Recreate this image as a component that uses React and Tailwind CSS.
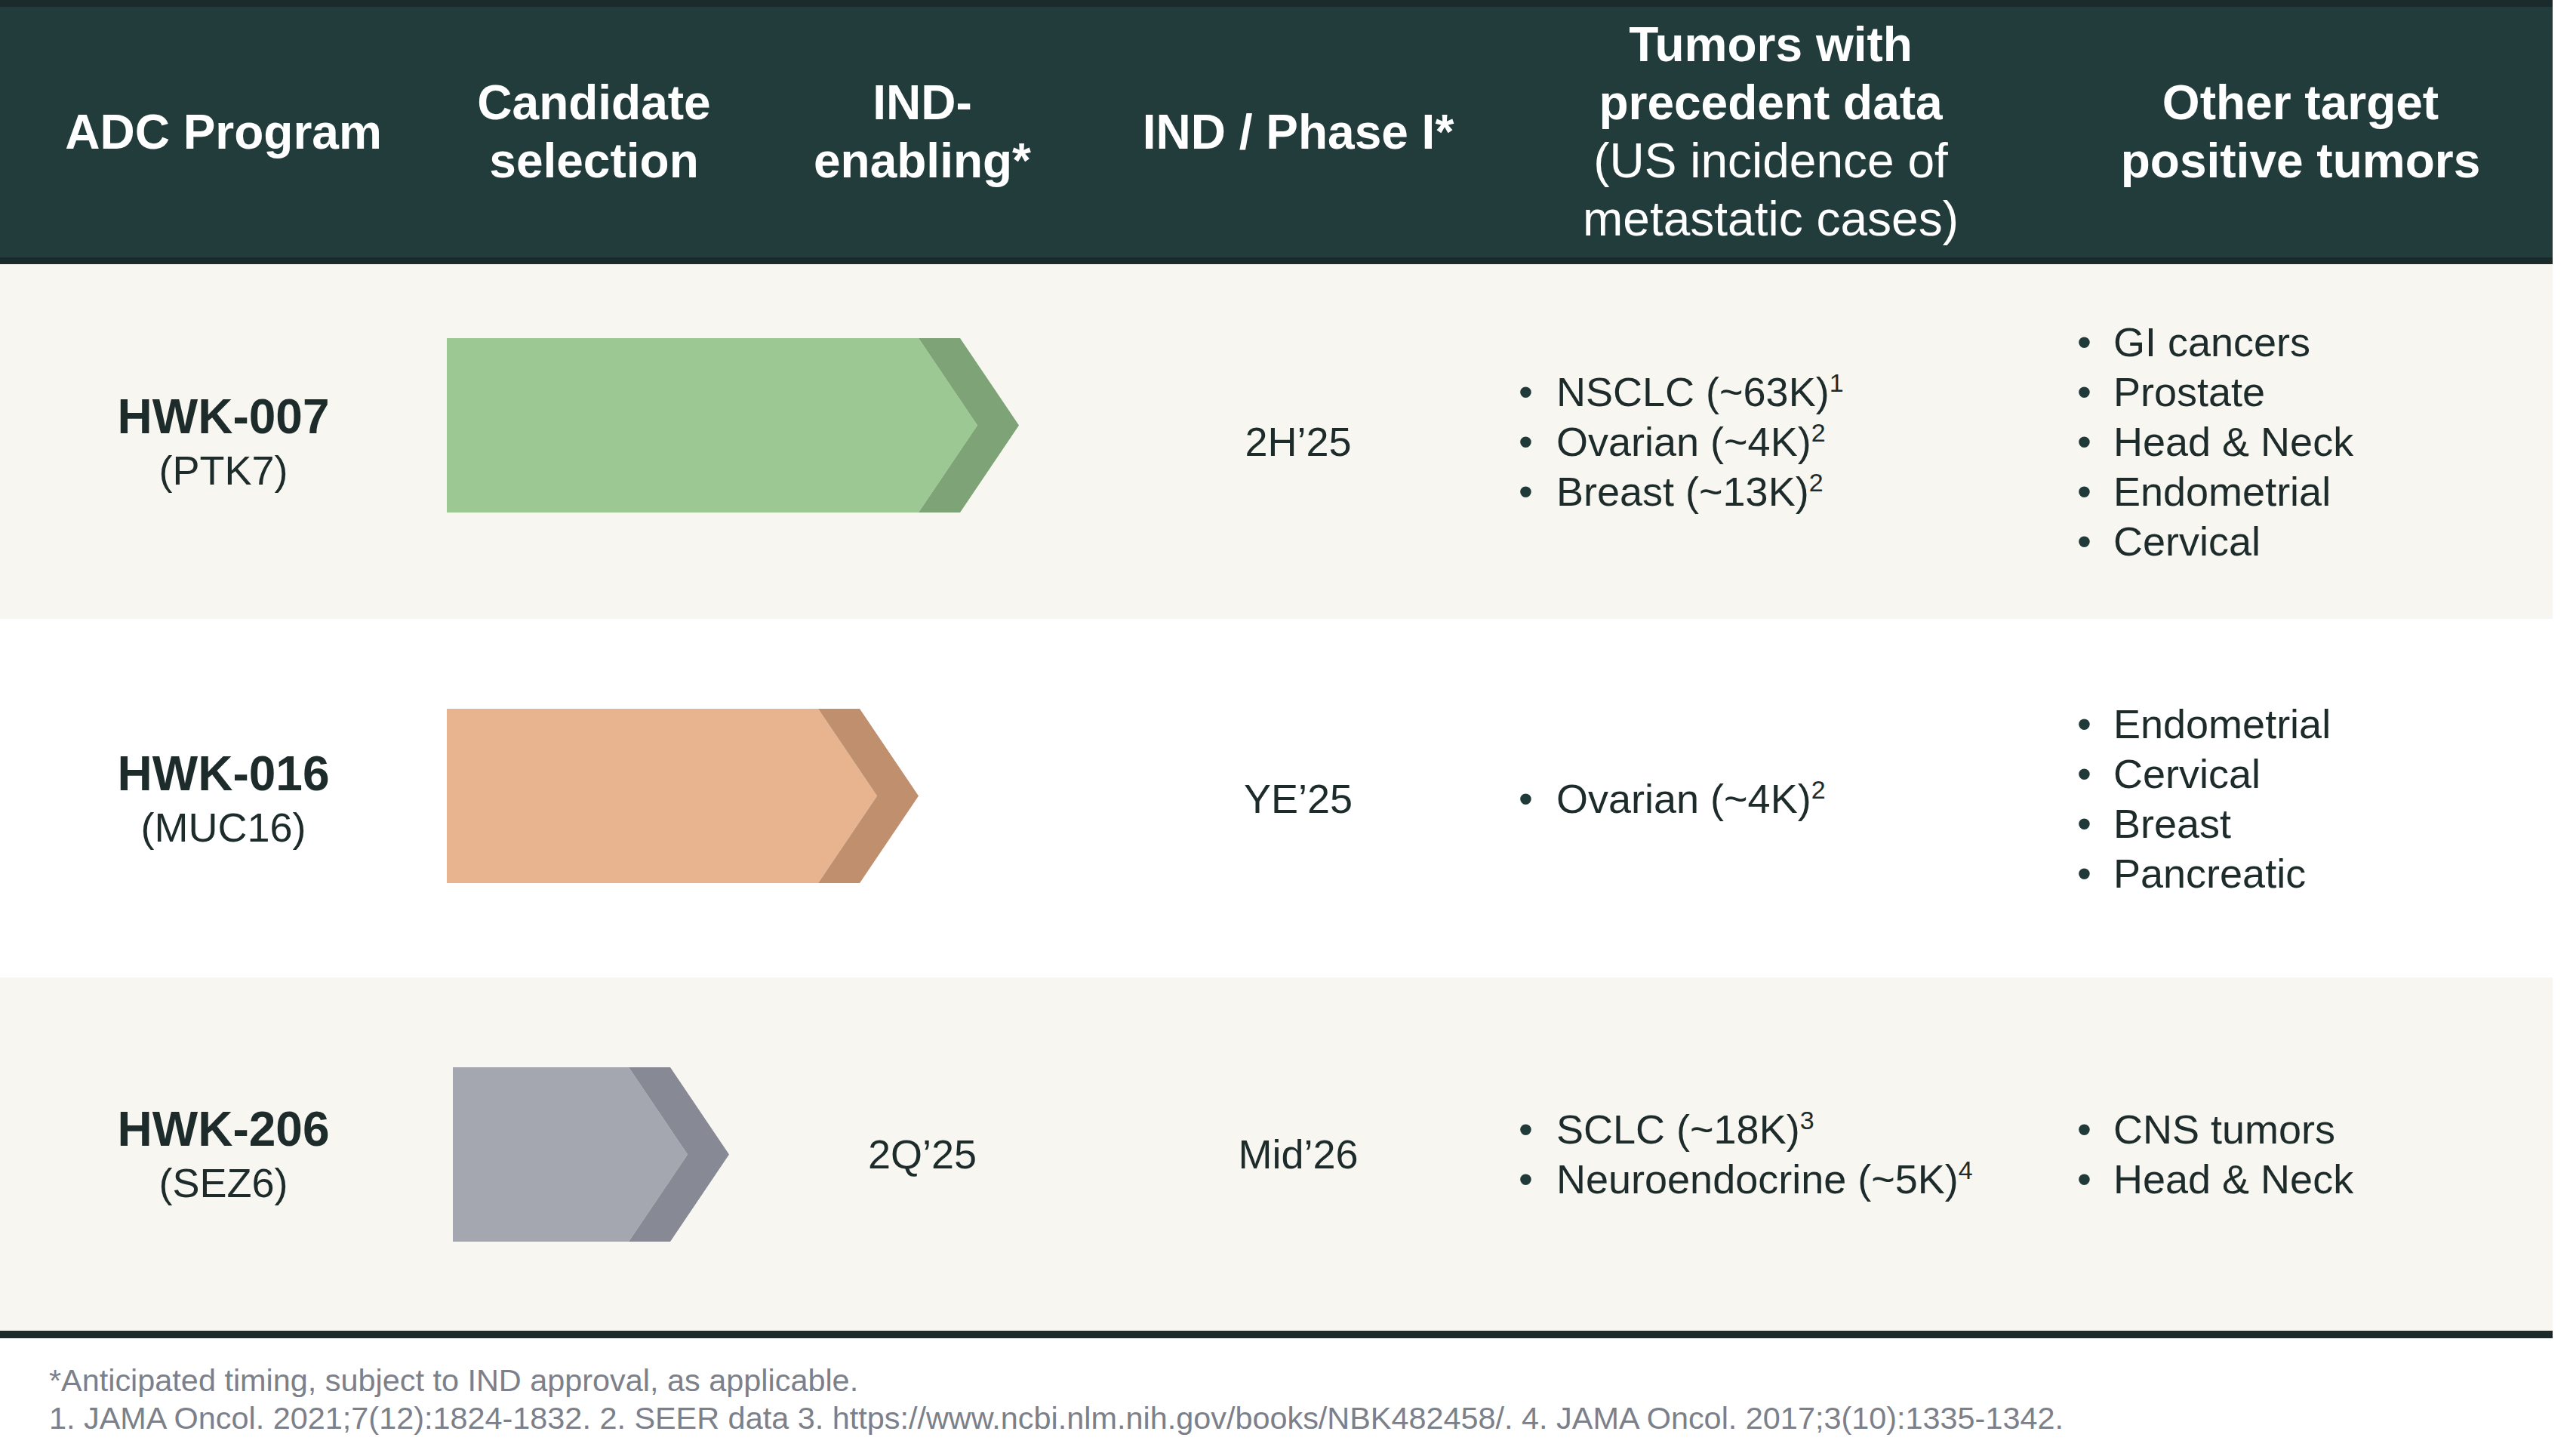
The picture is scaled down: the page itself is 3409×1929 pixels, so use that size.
import React from 'react';

const programs = [
  {
    name: 'HWK-007',
    target: '(PTK7)',
    rowClass: 'h-[470px] bg-[#f7f6f1]',
    arrow: { width: 758, light: '#9cc894', dark: '#7ea376', className: 'col-span-2 mb-[43px]' },
    enabling: null,
    phase: '2H’25',
    tumors: [['NSCLC (~63K)', '1'], ['Ovarian (~4K)', '2'], ['Breast (~13K)', '2']],
    other: ['GI cancers', 'Prostate', 'Head & Neck', 'Endometrial', 'Cervical'],
  },
  {
    name: 'HWK-016',
    target: '(MUC16)',
    rowClass: 'h-[475px] bg-white',
    arrow: { width: 625, light: '#e8b490', dark: '#c0906e', className: 'col-span-2 mb-[6px]' },
    enabling: null,
    phase: 'YE’25',
    tumors: [['Ovarian (~4K)', '2']],
    other: ['Endometrial', 'Cervical', 'Breast', 'Pancreatic'],
  },
  {
    name: 'HWK-206',
    target: '(SEZ6)',
    rowClass: 'h-[468px] bg-[#f7f6f1]',
    arrow: { width: 366, light: '#a5a7b0', dark: '#878a94', className: 'ml-[8px]' },
    enabling: '2Q’25',
    phase: 'Mid’26',
    tumors: [['SCLC (~18K)', '3'], ['Neuroendocrine (~5K)', '4']],
    other: ['CNS tumors', 'Head & Neck'],
  },
];

const grid = 'grid grid-cols-[592px_390px_480px_516px_736px_668px]';

// chevron-ended bar: light body plus a darker band on the point
const Arrow = ({ width, light, dark }) => {
  const h = 231;
  const d = 78;
  const b = 55;
  const x1 = width - d - b;
  const body = `0,0 ${x1},0 ${width - b},${h / 2} ${x1},${h} 0,${h}`;
  const band = `${x1},0 ${width - d},0 ${width},${h / 2} ${width - d},${h} ${x1},${h} ${width - b},${h / 2}`;
  return (
    <svg width={width} height={h} viewBox={`0 0 ${width} ${h}`} className="block">
      <polygon points={body} fill={light} />
      <polygon points={band} fill={dark} />
    </svg>
  );
};

const Bullets = ({ items, padClass, gapClass }) => (
  <ul className={`flex flex-col ${padClass}`}>
    {items.map((item, i) => {
      const [text, note] = Array.isArray(item) ? item : [item, null];
      return (
        <li key={i} className="flex whitespace-nowrap text-[54px] leading-[66px]">
          <span className={`${gapClass} shrink-0 text-[#1f3a38]`}>•</span>
          <span>
            {text}
            {note && <span className="relative -top-[19px] text-[34px] leading-none">{note}</span>}
          </span>
        </li>
      );
    })}
  </ul>
);

const App = () => {
  return (
    <div className="min-h-screen bg-white font-['Liberation_Sans',Arial,sans-serif] text-[#1d2b2b]">
      <div className="w-[3382px]">
        {/* Header */}
        <div className={`${grid} h-[350px] border-t-[9px] border-b-[9px] border-[#1b2a2a] bg-[#213c3b] text-white text-[64px] leading-[77px] font-bold text-center`}>
          <div className="flex items-center justify-center">ADC Program</div>
          <div className="flex items-center justify-center">
            <div>Candidate<br />selection</div>
          </div>
          <div className="flex items-center justify-center">
            <div>IND-<br />enabling*</div>
          </div>
          <div className="flex items-center justify-center whitespace-nowrap">IND / Phase I*</div>
          <div className="flex items-center justify-center">
            <div>
              Tumors with<br />precedent data<br />
              <span className="font-normal">(US incidence of<br />metastatic cases)</span>
            </div>
          </div>
          <div className="flex items-center justify-center">
            <div>Other target<br />positive tumors</div>
          </div>
        </div>

        {/* Program rows */}
        {programs.map((p) => (
          <div key={p.name} className={`${grid} ${p.rowClass}`}>
            <div className="flex flex-col items-center justify-center text-center">
              <div className="text-[64px] leading-[77px] font-bold">{p.name}</div>
              <div className="text-[54px] leading-[65px]">{p.target}</div>
            </div>
            <div className={`flex items-center ${p.arrow.className}`}>
              <Arrow width={p.arrow.width} light={p.arrow.light} dark={p.arrow.dark} />
            </div>
            {p.enabling && (
              <div className="flex items-center justify-center text-[54px] leading-[66px]">{p.enabling}</div>
            )}
            <div className="flex items-center justify-center text-[54px] leading-[66px]">{p.phase}</div>
            <div className="flex items-center">
              <Bullets items={p.tumors} padClass="pl-[34px]" gapClass="w-[50px]" />
            </div>
            <div className="flex items-center">
              <Bullets items={p.other} padClass="pl-[38px]" gapClass="w-[48px]" />
            </div>
          </div>
        ))}

        <div className="h-[10px] bg-[#1d2a2a]" />
      </div>

      {/* Footnotes */}
      <div className="pl-[65px] pt-[31px] text-[41.4px] leading-[50px] text-[#7c808a]">
        <p>*Anticipated timing, subject to IND approval, as applicable.</p>
        <p>1. JAMA Oncol. 2021;7(12):1824-1832. 2. SEER data 3. https://www.ncbi.nlm.nih.gov/books/NBK482458/. 4. JAMA Oncol. 2017;3(10):1335-1342.</p>
      </div>
    </div>
  );
};

export default App;
